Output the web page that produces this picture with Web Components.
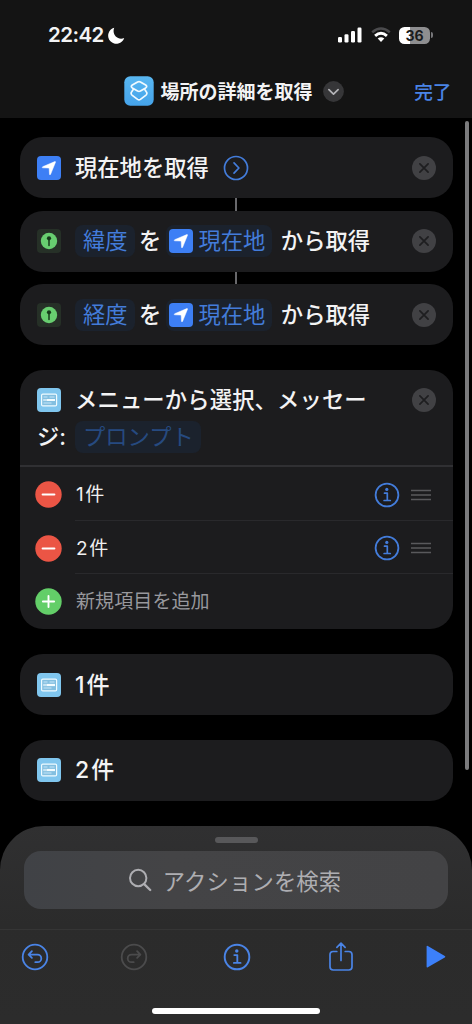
<!DOCTYPE html>
<html lang="ja">
<head>
<meta charset="utf-8">
<meta name="viewport" content="width=device-width">
<title>ショートカット</title>
<style>
html,body{margin:0;background:#000}
body{width:472px;height:1024px;overflow:hidden;font-family:Inter,"Noto Sans CJK JP",sans-serif;color:#f3f3f4}
</style>
</head>
<body>
<shortcut-editor></shortcut-editor>
<script>
const define = (name, html) => {
  const t = document.createElement('template');
  t.innerHTML = html;
  customElements.define(name, class extends HTMLElement {
    constructor() {
      super();
      this.attachShadow({mode: 'open'}).append(t.content.cloneNode(true));
    }
  });
};

const line = (w, c = 'currentColor') => `fill="none" stroke="${c}" stroke-width="${w}" stroke-linecap="round" stroke-linejoin="round"`;
const info = `<circle cx="13" cy="13" r="11.4" ${line(1.8)}/><circle cx="12.8" cy="7.4" r="1.6" fill="currentColor"/><path d="M10.5 11.2h2.8v7.2M10.1 18.5h6.2" ${line(1.7)}/>`;
const ICONS = {
  moon: [17, 17, `<path d="M6.2.7A8.2 8.2 0 1 0 16.2 11C10 13.600 3.500 8 6.200.7Z" fill="#fff"/>`],
  signal: [24, 16, `<g fill="#fff"><rect x="0" y="10" width="4" height="5.500" rx="1.200"/><rect x="6.500" y="7.300" width="4" height="8.200" rx="1.200"/><rect x="13" y="4" width="4" height="11.500" rx="1.200"/><rect x="19.500" y=".5" width="4" height="15" rx="1.200"/></g>`],
  wifi: [20, 16, `<g fill="none" stroke-width="2.500"><path d="M1.200 5.300Q10-2.300 18.800 5.300" stroke="#4b4b4d"/><path d="M4.100 8.800Q10 3.600 15.900 8.800" stroke="#fff" stroke-width="2.900"/></g><path d="M6.700 11.600Q10 8.900 13.300 11.600L10 15Z" fill="#fff"/>`],
  logo: [30, 30, `<defs><linearGradient id="g" x1="0" y1="0" x2="0" y2="1"><stop stop-color="#59b7f1"/><stop offset="1" stop-color="#45a3ea"/></linearGradient></defs><rect x=".3" y=".3" width="29.400" height="29.400" rx="6" fill="url(#g)"/><g ${line(1.7, '#f1faff')}><path d="M13.600 5.900Q15 5.200 16.400 5.900L21.700 9Q23.700 10.400 21.700 11.900L16.400 15Q15 15.700 13.600 15L8.300 11.900Q6.300 10.400 8.300 9Z"/><path d="M9.500 13.100L7.900 15.500Q6.100 17.600 8.300 19.400L13.600 23.400Q15 24.300 16.400 23.400L21.700 19.400Q23.900 17.600 22.100 15.500L20.500 13.100"/></g>`],
  chevron: [21, 21, `<circle cx="10.500" cy="10.500" r="10.400" fill="#363638"/><path d="M5.900 8.700L10.500 13.200L15.100 8.700" ${line(1.7, '#b4b4b8')}/>`],
  location: [24, 24, `<rect width="24" height="24" rx="4" fill="#3d7ff5"/><path d="M17.800 5.600Q18.700 5.400 18.500 6.200L13.600 18.300Q12.900 19.500 12.500 18.300L12.200 12.700Q12.200 12 11.500 12L5.700 11.800Q4.500 11.400 5.700 10.700Z" fill="#fff" stroke="#fff" stroke-width=".5"/>`],
  next: [26, 26, `<circle cx="13" cy="13" r="11.500" ${line(1.7)}/><path d="M11 7.900L15.900 13L11 18.100" ${line(1.7)}/>`],
  pin: [24, 24, `<rect width="24" height="24" rx="4" fill="#263027"/><circle cx="12" cy="12" r="8.200" fill="#68ce70"/><circle cx="12" cy="9.300" r="2.100" fill="#173b1b"/><path d="M12 9.500v7" ${line(1.5, '#173b1b')}/>`],
  close: [24, 24, `<circle cx="12" cy="12" r="12" fill="#414144"/><path d="M7.900 7.900l8.200 8.200M16.100 7.900l-8.200 8.200" ${line(1.7, '#1e1e20')}/>`],
  menu: [24, 24, `<rect width="24" height="24" rx="4" fill="#80c6ee"/><rect x="4.600" y="6.100" width="15" height="11.800" rx="1.200" fill="#83bfe0" stroke="#effbff" stroke-width="1.200"/><path d="M6.500 9h4M12.500 9h5M6.500 15h8" stroke="#c7e6f8" stroke-width="1"/><path d="M6.500 12h11.500" stroke="#f3fcff" stroke-width="2.200"/><path d="M7 12h3" stroke="#83bfe0" stroke-width=".8"/>`],
  minus: [27, 27, `<circle cx="13.500" cy="13.500" r="13.200" fill="#eb5545"/><path d="M7.600 13.500h11.800" ${line(2, '#fff')}/>`],
  plus: [27, 27, `<circle cx="13.500" cy="13.500" r="13.200" fill="#63ce68"/><path d="M7.900 13.500h11.200M13.500 7.900v11.200" ${line(1.9, '#fff')}/>`],
  info: [26, 26, info],
  'info-large': [28, 28, `<g transform="translate(14 14) scale(1.080) translate(-13 -13)">${info}</g>`],
  grip: [20, 12, `<path d="M0 1.500h20M0 6h20M0 10.500h20" stroke="#59595c" stroke-width="1.500"/>`],
  search: [24, 24, `<circle cx="10.200" cy="10" r="8.200" ${line(2)}/><path d="M16.200 16.200L22.200 22" ${line(2.4)}/>`],
  undo: [28, 28, `<circle cx="14" cy="14" r="12.300" ${line(1.8)}/><path d="M10.900 8.200L7.600 11.600L10.900 14.900M7.900 11.600H16.500A3.800 3.800 0 0 1 16.500 19.200H14.300" ${line(1.8)}/>`],
  redo: [28, 28, `<circle cx="14" cy="14" r="12.300" ${line(1.8)}/><path d="M17.100 8.200L20.400 11.600L17.100 14.900M20.100 11.600H11.500A3.800 3.800 0 0 0 11.500 19.200H13.700" ${line(1.8)}/>`],
  share: [24, 30, `<path d="M7.800 9.500H4.200Q1 9.500 1 12.700V24.800Q1 28 4.200 28H19.800Q23 28 23 24.800V12.700Q23 9.500 19.800 9.500H16.200M12 18.400V1.300M7.900 5.300L12 1.200L16.100 5.300" ${line(1.7)}/>`],
  play: [20, 24, `<path d="M.6 1.600Q.6.4 1.800 1L18.800 10.900Q20 11.700 18.800 12.500L1.800 22.200Q.6 22.900.6 21.600Z" fill="currentColor"/>`]
};
customElements.define('app-icon', class extends HTMLElement {
  constructor() { super(); this.attachShadow({mode: 'open'}); }
  connectedCallback() {
    const [w, h, body] = ICONS[this.getAttribute('name')];
    this.shadowRoot.innerHTML = `<style>:host{display:block;flex:none;width:${w}px;height:${h}px}svg{display:block}</style><svg width="${w}" height="${h}" viewBox="0 0 ${w} ${h}">${body}</svg>`;
  }
});

define('status-bar', `<style>
:host{display:flex;align-items:center;height:70px;padding:0 39.500px 0 48px}
.time{font:600 20.500px/24px Inter,sans-serif;letter-spacing:-.55px;width:56px;white-space:nowrap}
.moon{margin:1px 0 0 3.500px}.sp{flex:1}.wifi{margin:0 8.500px 0 9px}
.bat{display:flex;width:31px;height:17px;border-radius:5.500px;background:linear-gradient(90deg,#fff 36%,#8e8e90 36%);color:#1b1b1c;font:700 14px/17px Inter,sans-serif;align-items:center;justify-content:center}
.nub{width:1.500px;height:6px;margin-left:1px;border-radius:0 2px 2px 0;background:#77777a}
</style><span class="time">22:42</span><app-icon class="moon" name="moon"></app-icon><span class="sp"></span><app-icon name="signal"></app-icon><app-icon class="wifi" name="wifi"></app-icon><span class="bat">36</span><span class="nub"></span>`);

define('title-bar', `<style>
:host{display:grid;grid-template-columns:30px 162px 21px 1fr auto;align-items:center;height:42px;padding:0 20.500px 0 124px;white-space:nowrap}
.t{margin-left:6.500px;font:700 19px/26px "Noto Sans CJK JP",sans-serif}
.c{margin-left:7px}.d{grid-column:5;color:#4a84e6;font:500 18.700px/26px "Noto Sans CJK JP",sans-serif}
</style><app-icon name="logo"></app-icon><span class="t"><slot></slot></span><app-icon class="c" name="chevron"></app-icon><span class="d">完了</span>`);

define('action-card', `<style>
:host{display:flex;align-items:center;box-sizing:border-box;height:61.300px;padding:0 17px 0 17.500px;border-radius:23px;background:#1c1c1e;font:500 22.300px/32px Inter,"Noto Sans CJK JP",sans-serif;white-space:nowrap}
.body{display:flex;align-items:center;margin-left:14px;flex:1}
</style><slot name="icon"></slot><div class="body"><slot></slot></div><slot name="end"></slot>`);

define('flow-link', `<style>:host{display:block;width:2px;height:12.300px;margin:0 auto;background:#68686b}</style>`);

define('variable-token', `<style>
:host{display:inline-flex;align-items:center;box-sizing:border-box;height:32px;padding:0 7.500px 0 8px;border-radius:8px;background:#1b222d;color:#437cda;font-weight:400}
:host([tile]){padding:0 7px 0 3px;gap:5.500px}
:host([empty]){color:#264a80}
</style><slot></slot>`);

define('menu-item', `<style>
:host{display:flex;align-items:center;height:53.500px;padding-left:15.700px;font:400 19px/26px Inter,"Noto Sans CJK JP",sans-serif;letter-spacing:.1px;color:#f0f0f1}
.lead{padding-top:1px}
.r{display:flex;align-items:center;box-sizing:border-box;flex:1;height:100%;margin-left:12.800px;padding-right:22px;border-bottom:1px solid #29292c}
:host([last]) .r{border:0;color:#98989d}
:host([last]) .lead{padding:0}
.t{flex:1;padding:3px 0 0 1px}.e{display:flex;align-items:center;gap:11px;color:#437cda;padding-top:2px}
:host([last]) .t{padding-top:2px}
</style><div class="lead"><slot name="lead"></slot></div><div class="r"><span class="t"><slot></slot></span><span class="e"><slot name="end"></slot></span></div>`);

define('menu-card', `<style>
:host{display:block;box-sizing:border-box;height:259.500px;margin:24.500px 0;border-radius:23px;background:#1c1c1e;overflow:hidden}
.head{box-sizing:border-box;height:97.500px;padding:11.500px 17px 0 17.500px;border-bottom:2.500px solid #303033;font:500 22.300px/37px Inter,"Noto Sans CJK JP",sans-serif;white-space:nowrap}
.l{display:flex;align-items:center;height:37px}
.l .x{flex:1;margin-left:14px;letter-spacing:.15px}.j{width:38px}
</style><div class="head">
<div class="l"><app-icon name="menu"></app-icon><span class="x">メニューから選択、メッセー</span><app-icon name="close"></app-icon></div>
<div class="l"><span class="j">ジ:</span><variable-token empty>プロンプト</variable-token></div>
</div><slot></slot>`);

define('action-list', `<style>
:host{display:block;padding:19px 19.500px 0;height:708px;box-sizing:border-box}
.g{margin-bottom:24.500px}.wo{margin:0 4.500px 0 4px}.kara{margin-left:8.500px}
.num,.item{display:flex;gap:2px}.num{font-size:23px}
.item{gap:1.500px}
.next{margin-left:14px;color:#437cda}
</style>
<action-card><app-icon slot="icon" name="location"></app-icon><span>現在地を取得</span><app-icon class="next" name="next"></app-icon><app-icon slot="end" name="close"></app-icon></action-card>
<flow-link></flow-link>
<action-card><app-icon slot="icon" name="pin"></app-icon><variable-token>緯度</variable-token><span class="wo">を</span><variable-token tile><app-icon name="location"></app-icon><span>現在地</span></variable-token><span class="kara">から取得</span><app-icon slot="end" name="close"></app-icon></action-card>
<flow-link></flow-link>
<action-card><app-icon slot="icon" name="pin"></app-icon><variable-token>経度</variable-token><span class="wo">を</span><variable-token tile><app-icon name="location"></app-icon><span>現在地</span></variable-token><span class="kara">から取得</span><app-icon slot="end" name="close"></app-icon></action-card>
<menu-card>
<menu-item><app-icon slot="lead" name="minus"></app-icon><span class="item"><span>1</span><span>件</span></span><app-icon slot="end" name="info"></app-icon><app-icon slot="end" name="grip"></app-icon></menu-item>
<menu-item><app-icon slot="lead" name="minus"></app-icon><span class="item"><span>2</span><span>件</span></span><app-icon slot="end" name="info"></app-icon><app-icon slot="end" name="grip"></app-icon></menu-item>
<menu-item last><app-icon slot="lead" name="plus"></app-icon>新規項目を追加</menu-item>
</menu-card>
<action-card class="g"><app-icon slot="icon" name="menu"></app-icon><span class="num"><span>1</span><span>件</span></span></action-card>
<action-card><app-icon slot="icon" name="menu"></app-icon><span class="num"><span>2</span><span>件</span></span></action-card>`);

define('search-field', `<style>
:host{display:flex;align-items:center;justify-content:center;gap:11px;box-sizing:border-box;height:57.500px;margin:0 24px;padding-right:3px;border-radius:17px;background:linear-gradient(90deg,#404246,#444446 35%,#434345);color:#aeaeb2;font:400 22.300px/32px "Noto Sans CJK JP",sans-serif;letter-spacing:.15px}
</style><app-icon name="search"></app-icon><span><slot></slot></span>`);

define('tool-bar', `<style>
:host{display:flex;align-items:center;box-sizing:border-box;height:55px;margin-top:20.500px;padding-left:20.500px;border-top:1px solid #353535;color:#4a84e6}
.redo{color:#4b4b4c;margin-left:71px}.info{margin-left:75.500px}.share{margin-left:77.500px}.play{color:#3c80fa;margin-left:73.500px}
</style><app-icon name="undo"></app-icon><app-icon class="redo" name="redo"></app-icon><app-icon class="info" name="info-large"></app-icon><app-icon class="share" name="share"></app-icon><app-icon class="play" name="play"></app-icon>`);

define('bottom-sheet', `<style>
:host{display:block;height:198px;border-radius:44px 44px 0 0;background:linear-gradient(#303031,#2b2b2b 50%,#2c2c2c)}
.grab{width:43px;height:6px;margin:0 auto 8.500px;border-radius:3px;background:#58585a}
.top{height:10.500px}.home{width:168px;height:6px;margin:24px auto 0;border-radius:3px;background:#fff}
</style><div class="top"></div><div class="grab"></div><search-field>アクションを検索</search-field><tool-bar></tool-bar><div class="home"></div>`);

define('shortcut-editor', `<style>
:host{display:block;position:relative;width:472px;height:1024px;background:#000}
header{height:118px;background:#141414}
.scroll{position:absolute;left:465px;top:121px;width:4px;height:648.500px;border-radius:2px;background:#7b7b7d}
</style><header><status-bar></status-bar><title-bar>場所の詳細を取得</title-bar></header><action-list></action-list><bottom-sheet></bottom-sheet><div class="scroll"></div>`);
</script>
</body>
</html>
